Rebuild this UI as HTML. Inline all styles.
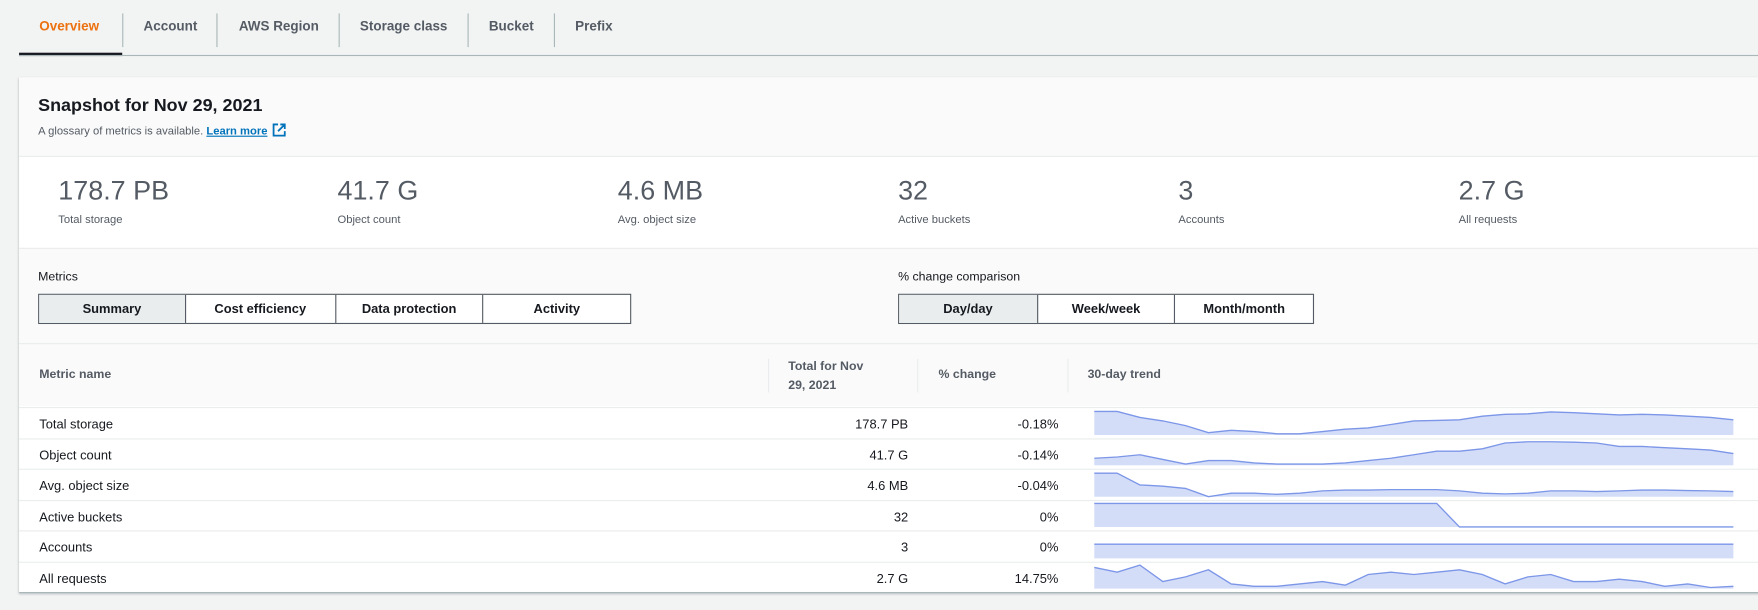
<!DOCTYPE html>
<html><head><meta charset="utf-8"><style>
*{box-sizing:border-box;margin:0;padding:0}
body{width:1758px;height:609px;background:#f2f3f3;font-family:"Liberation Sans",sans-serif;color:#16191f;position:relative;overflow:hidden}
#w{position:absolute;left:0;top:0;width:1568px;height:544px;transform:scale(1.1212);transform-origin:0 0}
.abs{position:absolute}
.tab{position:absolute;top:16px;font-size:12px;font-weight:bold;color:#545b64}
.sep{position:absolute;top:12px;width:1px;height:30px;background:#aab7b8}
.panel{position:absolute;left:17px;top:69px;width:1560px;height:460px;background:#fff;box-shadow:0 1px 2px rgba(0,28,36,.3)}
.gray{background:#fafafa}
.val{position:absolute;top:157px;font-size:24px;color:#545b64}
.lab{position:absolute;top:191px;font-size:10px;color:#545b64}
.seg{position:absolute;height:27px;border:1px solid #545b64;display:flex;background:#fff}
.seg div{border-right:1px solid #545b64;font-size:11.5px;font-weight:bold;color:#16191f;text-align:center;line-height:25px;padding-top:1px}
.seg div:last-child{border-right:none}
.seg .on{background:#eaeded}
.row{position:absolute;left:17px;width:1560px;height:27.5px;border-top:1px solid #eaeded;font-size:11.5px}
.row span{position:absolute;top:8.5px}
</style></head><body><div id="w">
<div class="tab" style="left:35px;color:#ec7211">Overview</div>
<div class="abs" style="left:17px;top:47px;width:92px;height:3px;background:#16191f"></div>
<div class="sep" style="left:109px"></div>
<div class="tab" style="left:128px">Account</div>
<div class="sep" style="left:193px"></div>
<div class="tab" style="left:213px">AWS Region</div>
<div class="sep" style="left:302px"></div>
<div class="tab" style="left:321px">Storage class</div>
<div class="sep" style="left:417px"></div>
<div class="tab" style="left:436px">Bucket</div>
<div class="sep" style="left:494px"></div>
<div class="tab" style="left:513px">Prefix</div>
<div class="abs" style="left:17px;top:49px;width:1551px;height:1px;background:#aab7b8"></div>

<div class="panel"></div>
<div class="abs gray" style="left:17px;top:69px;width:1551px;height:71px;border-bottom:1px solid #eaeded"></div>
<div class="abs" style="left:34px;top:86px;font-size:16px;font-weight:bold">Snapshot for Nov 29, 2021</div>
<div class="abs" style="left:34px;top:110px;font-size:10px;color:#545b64">A glossary of metrics is available. <span style="color:#0073bb;font-weight:bold;text-decoration:underline">Learn more</span>
<svg width="12" height="12" viewBox="0 0 12 12" style="vertical-align:-2px;margin-left:2px"><path d="M5 1H1v10h10V7M7 1h4v4M11 1L5 7" fill="none" stroke="#0073bb" stroke-width="1.6"/></svg></div>

<div class="val" style="left:52px">178.7 PB</div><div class="lab" style="left:52px">Total storage</div>
<div class="val" style="left:301px">41.7 G</div><div class="lab" style="left:301px">Object count</div>
<div class="val" style="left:551px">4.6 MB</div><div class="lab" style="left:551px">Avg. object size</div>
<div class="val" style="left:801px">32</div><div class="lab" style="left:801px">Active buckets</div>
<div class="val" style="left:1051px">3</div><div class="lab" style="left:1051px">Accounts</div>
<div class="val" style="left:1301px">2.7 G</div><div class="lab" style="left:1301px">All requests</div>

<div class="abs gray" style="left:17px;top:221px;width:1551px;height:141px;border-top:1px solid #eaeded"></div>
<div class="abs" style="left:34px;top:241px;font-size:11px">Metrics</div>
<div class="seg" style="left:34px;top:262px;width:529px"><div class="on" style="width:131px">Summary</div><div style="width:134px">Cost efficiency</div><div style="width:132px">Data protection</div><div style="width:131px">Activity</div></div>
<div class="abs" style="left:801px;top:241px;font-size:11px">% change comparison</div>
<div class="seg" style="left:801px;top:262px;width:371px"><div class="on" style="width:124px">Day/day</div><div style="width:123px">Week/week</div><div style="width:123px">Month/month</div></div>

<div class="abs" style="left:17px;top:306px;width:1551px;height:1px;background:#eaeded"></div>
<div class="abs" style="left:35px;top:328px;font-size:11px;font-weight:bold;color:#545b64">Metric name</div>
<div class="abs" style="left:685px;top:320px;width:1px;height:30px;background:#eaeded"></div>
<div class="abs" style="left:703px;top:319px;font-size:11px;font-weight:bold;color:#545b64;line-height:17px">Total for Nov<br>29, 2021</div>
<div class="abs" style="left:818px;top:320px;width:1px;height:30px;background:#eaeded"></div>
<div class="abs" style="left:837px;top:328px;font-size:11px;font-weight:bold;color:#545b64">% change</div>
<div class="abs" style="left:952px;top:320px;width:1px;height:30px;background:#eaeded"></div>
<div class="abs" style="left:970px;top:328px;font-size:11px;font-weight:bold;color:#545b64">30-day trend</div>

<div class="row" style="top:363px"><span style="left:18px">Total storage</span><span style="right:767px">178.7 PB</span><span style="right:633px">-0.18%</span></div>
<div class="row" style="top:391px"><span style="left:18px">Object count</span><span style="right:767px">41.7 G</span><span style="right:633px">-0.14%</span></div>
<div class="row" style="top:418px"><span style="left:18px">Avg. object size</span><span style="right:767px">4.6 MB</span><span style="right:633px">-0.04%</span></div>
<div class="row" style="top:446px"><span style="left:18px">Active buckets</span><span style="right:767px">32</span><span style="right:633px">0%</span></div>
<div class="row" style="top:473px"><span style="left:18px">Accounts</span><span style="right:767px">3</span><span style="right:633px">0%</span></div>
<div class="row" style="top:501px"><span style="left:18px">All requests</span><span style="right:767px">2.7 G</span><span style="right:633px">14.75%</span></div>
<div class="abs" style="left:17px;top:528px;width:1551px;height:1px;background:#aab7b8"></div>

<svg id="sp" class="abs" style="left:0;top:0" width="1568" height="544"></svg>
</div>
<script>
var rows=[
[364,[1,1,.75,.6,.4,.1,.2,.15,.05,.05,.15,.25,.3,.45,.6,.62,.65,.8,.88,.9,.98,.95,.9,.85,.88,.85,.8,.75,.65]],
[391,[.3,.35,.45,.25,.05,.2,.2,.1,.05,.05,.05,.1,.2,.3,.45,.6,.6,.7,.95,1,1,.98,.95,.8,.8,.75,.7,.65,.5]],
[419,[1,1,.5,.45,.35,0,.15,.15,.1,.15,.25,.28,.28,.3,.3,.3,.25,.15,.12,.15,.25,.25,.22,.25,.28,.28,.26,.25,.22]],
[446,[1,1,1,1,1,1,1,1,1,1,1,1,1,1,1,1,0,0,0,0,0,0,0,0,0,0,0,0,0]],
[474,[.6,.6,.6,.6,.6,.6,.6,.6,.6,.6,.6,.6,.6,.6,.6,.6,.6,.6,.6,.6,.6,.6,.6,.6,.6,.6,.6,.6,.6]],
[501,[.9,.7,1,.3,.5,.8,.2,.1,.1,.2,.3,.15,.6,.7,.6,.7,.8,.6,.2,.5,.6,.3,.3,.4,.3,.1,.2,.05,.1]]];
var s='';rows.forEach(function(r){var top=r[0]+3,h=21,x0=976,x1=1546,n=r[1].length,st=(x1-x0)/(n-1),p='';
r[1].forEach(function(v,i){p+=(i?'L':'M')+(x0+i*st).toFixed(1)+' '+(top+h-v*h).toFixed(1)});
s+='<path d="'+p+'L'+x1+' '+(top+h)+'L'+x0+' '+(top+h)+'Z" fill="#d4ddf7"/><path d="'+p+'" fill="none" stroke="#7c96e8" stroke-width="1.2"/>';});
document.getElementById('sp').innerHTML=s;
</script>
</body></html>
